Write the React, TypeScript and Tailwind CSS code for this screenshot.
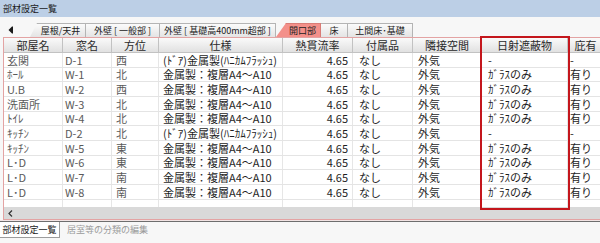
import React from "react";

type Row = string[];

const rows: Row[] = [
  ["玄関", "D-1", "西", "(ﾄﾞｱ)金属製(ﾊﾆｶﾑﾌﾗｯｼｭ)", "4.65", "なし", "外気", "-", "-"],
  ["ﾎｰﾙ", "W-1", "北", "金属製：複層A4～A10", "4.65", "なし", "外気", "ｶﾞﾗｽのみ", "有り"],
  ["U.B", "W-2", "西", "金属製：複層A4～A10", "4.65", "なし", "外気", "ｶﾞﾗｽのみ", "有り"],
  ["洗面所", "W-3", "北", "金属製：複層A4～A10", "4.65", "なし", "外気", "ｶﾞﾗｽのみ", "有り"],
  ["ﾄｲﾚ", "W-4", "北", "金属製：複層A4～A10", "4.65", "なし", "外気", "ｶﾞﾗｽのみ", "有り"],
  ["ｷｯﾁﾝ", "D-2", "北", "(ﾄﾞｱ)金属製(ﾊﾆｶﾑﾌﾗｯｼｭ)", "4.65", "なし", "外気", "-", "-"],
  ["ｷｯﾁﾝ", "W-5", "東", "金属製：複層A4～A10", "4.65", "なし", "外気", "ｶﾞﾗｽのみ", "有り"],
  ["L･D", "W-6", "東", "金属製：複層A4～A10", "4.65", "なし", "外気", "ｶﾞﾗｽのみ", "有り"],
  ["L･D", "W-7", "南", "金属製：複層A4～A10", "4.65", "なし", "外気", "ｶﾞﾗｽのみ", "有り"],
  ["L･D", "W-8", "南", "金属製：複層A4～A10", "4.65", "なし", "外気", "ｶﾞﾗｽのみ", "有り"],
  ["", "", "", "", "", "", "", "", ""],
];

const headers = ["部屋名", "窓名", "方位", "仕様", "熱貫流率", "付属品", "隣接空間", "日射遮蔽物", "庇有"];

const colW = [
  "w-[59px]",
  "w-[49px]",
  "w-[47px]",
  "w-[124px]",
  "w-[70px]",
  "w-[60px]",
  "w-[69px]",
  "w-[86px]",
  "w-[36px]",
];

const cellPad = [
  "pl-[3px] text-[#5a5a5a]",
  "pl-[2px] text-[#5a5a5a]",
  "pl-[4px] text-[#5a5a5a]",
  "pl-[4px] text-[#1e1e1e]",
  "pr-[4px] justify-end text-[#1e1e1e]",
  "pl-[6px] text-[#1e1e1e]",
  "pl-[5px] text-[#1e1e1e]",
  "pl-[6px] text-[#1e1e1e]",
  "pl-[2px] text-[#1e1e1e]",
];

function Tab({
  label,
  className,
}: {
  label: string;
  className: string;
}) {
  return (
    <div
      className={
        "h-[14px] shrink-0 flex items-center justify-center text-[9px] leading-[14px] whitespace-nowrap text-[#222] border-t border-r border-[#b4b4b4] " +
        className
      }
    >
      {label}
    </div>
  );
}

export default function App() {
  return (
    <div className="relative w-[600px] h-[243px] overflow-hidden bg-[#f7f7f7] font-['Noto_Sans_CJK_JP',sans-serif] text-[#222]">
      {/* title bar */}
      <div className="h-[17px] bg-[#bccfe6] flex items-center pl-[3px] text-[9px] leading-[17px] text-[#1a1a1a]">
        部材設定一覧
      </div>
      <div className="h-[6px]" />

      {/* tab strip */}
      <div className="h-[14px] flex items-end">
        <div className="w-[30px] shrink-0 h-full flex items-center pl-[8px]">
          <svg width="5" height="8" viewBox="0 0 5 8">
            <polygon points="4,0.5 0.5,4 4,7.5" fill="#1a1a1a" />
            <rect x="4" y="0.5" width="1" height="7" fill="#1a1a1a" />
          </svg>
        </div>
        <Tab
          label="屋根/天井"
          className="w-[56px] pl-[6px] bg-linear-to-b from-[#fbfbfb] to-[#e4e4e4] [clip-path:polygon(7px_0,100%_0,100%_100%,0_100%)]"
        />
        <Tab label="外壁 [ 一般部 ]" className="w-[74px] bg-linear-to-b from-[#fbfbfb] to-[#e4e4e4]" />
        <Tab
          label="外壁 [ 基礎高400mm超部 ]"
          className="w-[116px] bg-linear-to-b from-[#fbfbfb] to-[#e4e4e4]"
        />
        <Tab
          label="開口部"
          className="w-[45px] pl-[9px] bg-[#f3908a] border-[#d97c76] [clip-path:polygon(10px_0,100%_0,100%_100%,0_100%)]"
        />
        <Tab label="床" className="w-[27px] bg-linear-to-b from-[#fbfbfb] to-[#e4e4e4]" />
        <Tab label="土間床･基礎" className="w-[65px] bg-linear-to-b from-[#fbfbfb] to-[#e4e4e4]" />
      </div>

      {/* grid */}
      <div className="ml-[3px] w-[650px] border-l border-t border-b border-[#e3a3a3] bg-white">
        <div className="h-[15px] flex">
          {headers.map((h, i) => (
            <div
              key={h}
              className={
                colW[i] +
                " shrink-0 h-full flex items-center justify-center text-[11px] leading-[15px] whitespace-nowrap text-[#2a2a2a] bg-linear-to-b from-[#fafafa] to-[#e1e1e1] border-r border-b border-[#c2c2c2]"
              }
            >
              {h}
            </div>
          ))}
          <div className="flex-1 h-full bg-linear-to-b from-[#fafafa] to-[#e1e1e1] border-b border-[#c2c2c2]" />
        </div>
        <div className="h-[154px] overflow-hidden">
          {rows.map((r, ri) => (
            <div key={ri} className="h-[14.67px] flex border-b border-[#e4e4e4]">
              {r.map((c, ci) => (
                <div
                  key={ci}
                  className={
                    colW[ci] +
                    " " +
                    cellPad[ci] +
                    " shrink-0 h-full flex items-center text-[11px] leading-[14px] whitespace-nowrap border-r border-[#e6e6e6]"
                  }
                >
                  {c}
                </div>
              ))}
            </div>
          ))}
        </div>
        <div className="h-[12px] bg-[#d9d9d9] flex items-center pl-[4px]">
          <svg width="5" height="7" viewBox="0 0 5 7">
            <polyline points="4,0.5 1,3.5 4,6.5" fill="none" stroke="#333" strokeWidth="1.2" />
          </svg>
        </div>
      </div>
      <div className="h-[1px] bg-[#f2e4e4]" />
      <div className="h-[1px] bg-[#6e6e6e]" />

      {/* bottom tabs */}
      <div className="h-[16px] flex">
        <div className="w-[60px] h-full bg-white border-r border-b border-[#9c9c9c] flex items-center justify-center text-[9px] leading-[15px] whitespace-nowrap text-[#1a1a1a]">
          部材設定一覧
        </div>
        <div className="h-full flex items-center pl-[7px] text-[9px] leading-[16px] whitespace-nowrap text-[#9a9a9a]">
          居室等の分類の編集
        </div>
      </div>

      {/* highlight box */}
      <div className="absolute left-[480px] top-[36px] w-[90px] h-[174px] border-2 border-[#c4161c]" />
    </div>
  );
}
